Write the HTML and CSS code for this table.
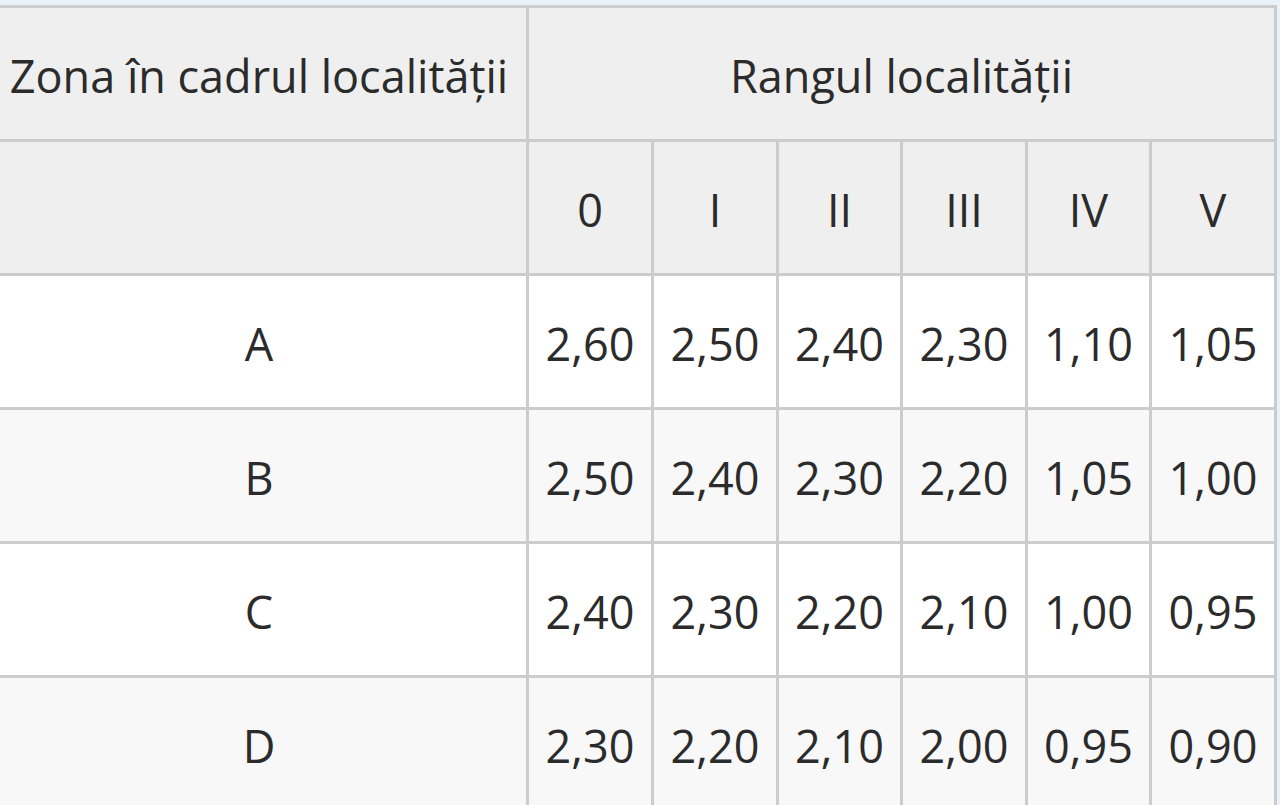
FILE: index.html
```html
<!DOCTYPE html>
<html lang="ro">
<head>
<meta charset="utf-8">
<title>Tabel</title>
<link rel="stylesheet" href="styles.css">
</head>
<body>
<div class="wrap">
<table class="grid">
  <colgroup>
    <col class="c-zone">
    <col class="c-r">
    <col class="c-r">
    <col class="c-r2">
    <col class="c-r">
    <col class="c-r2">
    <col class="c-r">
  </colgroup>
  <thead>
    <tr>
      <th>Zona în cadrul localității</th>
      <th colspan="6">Rangul localității</th>
    </tr>
    <tr>
      <th></th>
      <th>0</th><th>I</th><th>II</th><th>III</th><th>IV</th><th>V</th>
    </tr>
  </thead>
  <tbody>
    <tr><td>A</td><td>2,60</td><td>2,50</td><td>2,40</td><td>2,30</td><td>1,10</td><td>1,05</td></tr>
    <tr><td>B</td><td>2,50</td><td>2,40</td><td>2,30</td><td>2,20</td><td>1,05</td><td>1,00</td></tr>
    <tr><td>C</td><td>2,40</td><td>2,30</td><td>2,20</td><td>2,10</td><td>1,00</td><td>0,95</td></tr>
    <tr><td>D</td><td>2,30</td><td>2,20</td><td>2,10</td><td>2,00</td><td>0,95</td><td>0,90</td></tr>
  </tbody>
</table>
</div>
</body>
</html>
```
FILE: styles.css
```css
html, body {
  margin: 0;
  padding: 0;
  background: #eaf2f9;
  overflow: hidden;
}
.wrap {
  padding-top: 5px;
  margin-left: -11px;
}
.grid {
  border-collapse: collapse;
  table-layout: fixed;
  width: 1287px;
  font-family: "Open Sans", "Noto Sans", sans-serif;
  font-size: 45px;
  color: #2b2b2b;
  background: #fff;
}
.c-zone { width: 537px; }
.c-r { width: 125px; }
.c-r2 { width: 124px; }
.grid th,
.grid td {
  border: 3px solid #cccccc;
  height: 128px;
  padding: 3px 0 0;
  text-align: center;
  vertical-align: middle;
  font-weight: normal;
  white-space: nowrap;
}
.grid th {
  background: #efefef;
}
.grid tbody tr:nth-child(even) td {
  background: #f8f8f8;
}
```
